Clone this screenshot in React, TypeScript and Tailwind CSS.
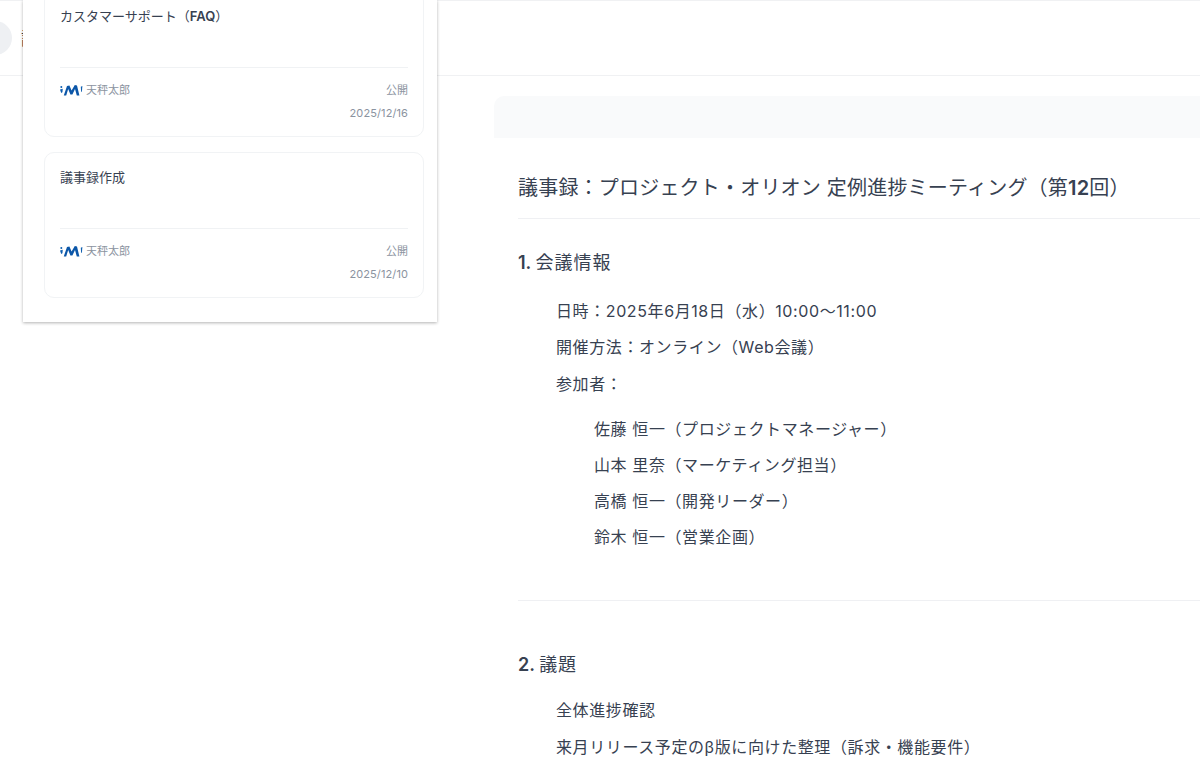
const font = { fontFamily: 'Inter, "Noto Sans CJK JP", "Noto Sans", sans-serif' };

function Logo() {
  return (
    <svg width="23" height="12" viewBox="0 0 23 12" className="shrink-0">
      <circle cx="1.3" cy="3" r="1" fill="#0f5fb0" />
      <path d="M0 5.6 L2.8 4.8 L2.4 8.2 L1.2 9 Z" fill="#0f5fb0" />
      <path d="M3.8 11.4 L7 2 L9.4 1.6 L11.6 6.6 L14.8 1 L17 1.6 L19.4 11.6 L16.8 11.6 L15 5 L12.4 10.4 L10.4 10.4 L8.2 5 L6.2 11.4 Z" fill="#0b56a8" />
      <path d="M20.8 2.8 L22.4 2 L21.9 7.4 L21.1 8 Z" fill="#0f5fb0" />
    </svg>
  );
}

function Card({ title, latin, tail, date }: { title: string; latin?: string; tail?: string; date: string }) {
  return (
    <div className="h-[146px] shrink-0 rounded-[10px] border border-[#f1f3f5] bg-white px-[15px] pt-[15px]">
      <div className="h-[61px] border-b border-[#f0f2f4] text-[13px] leading-[18px] text-[#374151]">
        {title}
        {latin && <span className="font-semibold">{latin}</span>}
        {tail}
      </div>
      <div className="mt-[14px] flex items-center justify-between text-[11px] leading-[16px] text-[#8b93a0]">
        <div className="flex items-center gap-[3px]">
          <Logo />
          <span>天秤太郎</span>
        </div>
        <span>公開</span>
      </div>
      <div className="mt-[7px] text-right text-[11px] leading-[16px] tracking-[0.1px] text-[#8b93a0]">{date}</div>
    </div>
  );
}

export default function App() {
  const people = [
    '佐藤 恒一（プロジェクトマネージャー）',
    '山本 里奈（マーケティング担当）',
    '高橋 恒一（開発リーダー）',
    '鈴木 恒一（営業企画）',
  ];
  return (
    <div className="relative h-[764px] w-[1200px] overflow-hidden bg-white text-[#374151]" style={font}>
      <header className="flex h-[76px] items-center border-t border-b border-[#f0f1f3]">
        <div className="ml-[-22px] h-[34px] w-[34px] rounded-full bg-[#eef0f3]" />
        <span className="ml-[9px] text-[18px] text-[#374151]">議</span>
      </header>

      <div className="absolute left-[23px] top-0 flex h-[322px] w-[414px] flex-col justify-end gap-[15px] bg-white pl-[21px] pr-[13px] pb-[24px] shadow-[0_1px_3px_rgba(0,0,0,0.3)]">
        <Card title="カスタマーサポート（" latin="FAQ" tail="）" date="2025/12/16" />
        <Card title="議事録作成" date="2025/12/10" />
      </div>

      <main className="pl-[494px]">
        <div className="mt-[20px] h-[42px] rounded-tl-[10px] bg-[#f9fafb]" />
        <div className="pl-[24px]">
          <h1 className="mt-[35px] h-[46px] border-b border-[#eff0f3] text-[20px] leading-[30px] font-normal tracking-[0.2px] text-[#374151]">
            議事録：プロジェクト・オリオン 定例進捗ミーティング（第<span className="font-semibold">12</span>回）
          </h1>
          <h2 className="mt-[30px] text-[18px] leading-[28px] font-normal tracking-[1px] text-[#374151]">
            <span className="font-semibold tracking-normal">1. </span>会議情報
          </h2>
          <div className="mt-[22px] pl-[38px] text-[16px] leading-[24px] tracking-[0.6px] text-[#374151]">
            <p>日時：2025年6月18日（水）10:00～11:00</p>
            <p className="mt-[12px]">開催方法：オンライン（Web会議）</p>
            <p className="mt-[13px]">参加者：</p>
            <ul className="mt-[21px] pl-[38px]">
              {people.map((p) => (
                <li key={p} className="mb-[12px]">{p}</li>
              ))}
            </ul>
          </div>
          <div className="mt-[51px] h-px bg-[#eff0f3]" />
          <h2 className="mt-[50px] text-[18px] leading-[28px] font-normal tracking-[1px] text-[#374151]">
            <span className="font-semibold tracking-normal">2. </span>議題
          </h2>
          <div className="mt-[19px] pl-[38px] text-[16px] leading-[24px] tracking-[0.6px] text-[#374151]">
            <p>全体進捗確認</p>
            <p className="mt-[13px]">来月リリース予定のβ版に向けた整理（訴求・機能要件）</p>
          </div>
        </div>
      </main>
    </div>
  );
}
